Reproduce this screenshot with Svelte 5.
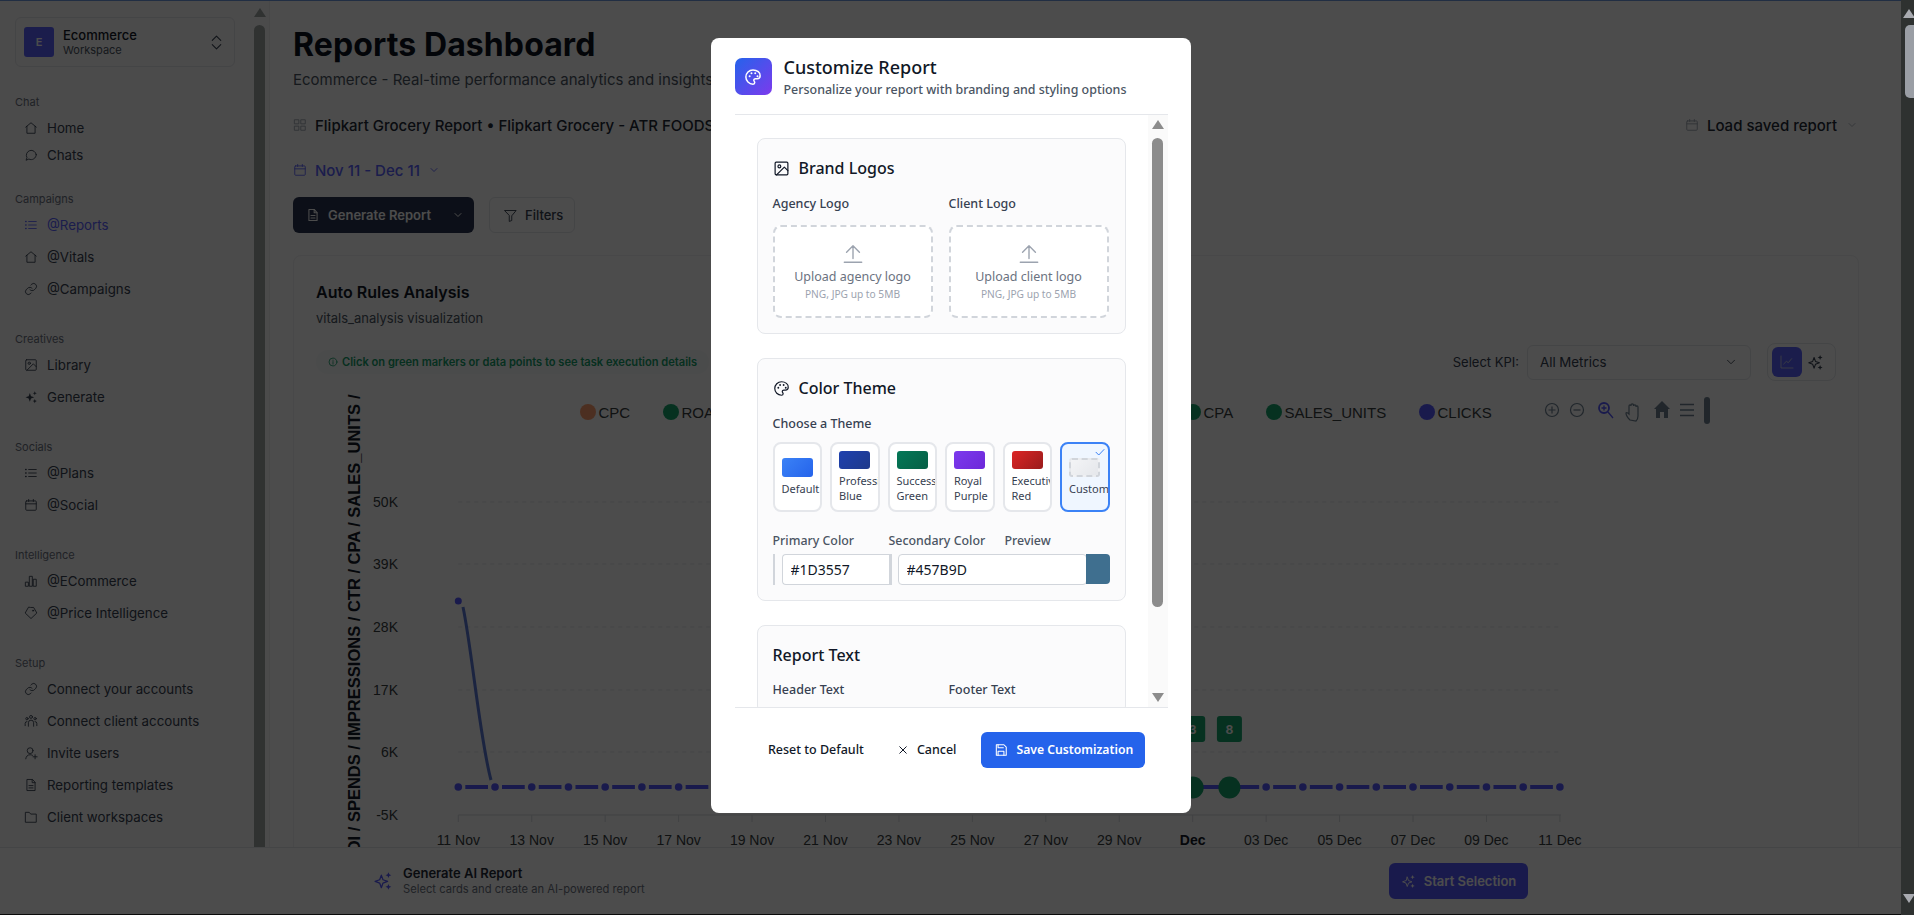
<script>
  const paths = {
    home: '<path d="M3 10.5 12 3l9 7.5"/><path d="M5 9v12h14V9"/>',
    chat: '<path d="M21 11.5a8.5 8.5 0 0 1-12.6 7.4L3.5 21l1.6-4.4A8.5 8.5 0 1 1 21 11.5z"/>',
    list: '<path d="M8 6h13M8 12h13M8 18h13"/><path d="M3 6h.5M3 12h.5M3 18h.5" stroke-width="2.6"/>',
    link: '<path d="M10 13a5 5 0 0 0 7.5.5l3-3a5 5 0 0 0-7-7l-1.7 1.7"/><path d="M14 11a5 5 0 0 0-7.5-.5l-3 3a5 5 0 0 0 7 7l1.7-1.7"/>',
    image: '<rect x="3" y="3" width="18" height="18" rx="1.5"/><circle cx="9" cy="9" r="2"/><path d="m21 15-5-5L5 21"/>',
    spark: '<path fill="currentColor" stroke="none" d="M10 5l2 5.5L17.5 12.5 12 14.5 10 20l-2-5.5L2.5 12.5 8 10.5zM18.5 2l1 2.5 2.5 1-2.5 1-1 2.500-1-2.500-2.500-1 2.500-1zM18.500 15.500l1 2.500 2.500 1-2.500 1-1 2.500-1-2.500-2.500-1 2.500-1z"/>',
    sparkline: '<path d="M10 5l2 5.500 5.500 2-5.500 2L10 20l-2-5.500-5.500-2 5.500-2z"/><path fill="currentColor" stroke="none" d="M18.500 1.500l1 2.500 2.500 1-2.500 1-1 2.500-1-2.500-2.500-1 2.500-1zM18.500 15.500l1 2.500 2.500 1-2.500 1-1 2.500-1-2.500-2.500-1 2.500-1z"/>',
    calendar: '<rect x="3" y="5" width="18" height="16" rx="1.500"/><path d="M3 10h18M8 2.500V6M16 2.500V6"/>',
    bars: '<rect x="3" y="14" width="4.500" height="7"/><rect x="9.800" y="4" width="4.500" height="17"/><rect x="16.500" y="9" width="4.500" height="12"/>',
    tag: '<path d="M12 2.500h4.500L22 12l-10 9.500L2 12l5.500-9.500z"/><circle cx="15.500" cy="8" r="1"/>',
    users: '<circle cx="12" cy="5" r="2.500"/><circle cx="5" cy="8" r="2"/><circle cx="19" cy="8" r="2"/><path d="M7.500 21v-6a4.500 4.500 0 0 1 9 0v6M2 20v-4a3 3 0 0 1 3-3M22 20v-4a3 3 0 0 0-3-3"/>',
    invite: '<circle cx="10.500" cy="8" r="5"/><path d="M3 22c.5-4.500 3.500-7 7.500-7 1.500 0 2.800.3 4 1M19 15v7M15.500 18.500h7"/>',
    file: '<path d="M14 2.500H5v19h14V8z"/><path d="M14 2.500V8h5M8.500 13h7M8.500 17h7"/>',
    folder: '<path d="M3 4h6l2.500 3H21v14H3z"/>',
    grid: '<rect x="3" y="3" width="7" height="7"/><rect x="14" y="3" width="7" height="7"/><rect x="3" y="14" width="7" height="7"/><rect x="14" y="14" width="7" height="7"/>',
    chev: '<path d="m6 9 6 6 6-6"/>',
    updown: '<path d="m6 9 6-6 6 6M6 15l6 6 6-6"/>',
    filter: '<path d="M3 4h18l-7 8.500V20l-4 1.500v-9z"/>',
    info: '<circle cx="12" cy="12" r="9.500"/><path d="M12 11v6M12 7.500v.5"/>',
    trend: '<path d="M3 3v18h18"/><path d="m7 15 4-4 3 2 5-6"/>',
    palette: '<path d="M12 2.500a9.500 9.500 0 0 0 0 19c1.500 0 2.300-1 2.300-2.200 0-.6-.3-1.100-.6-1.500-.4-.5-.6-.9-.6-1.500 0-1.200 1-2 2.200-2h2.200c2.500 0 4-1.700 4-4C22 6 17.500 2.500 12 2.500z"/><g fill="currentColor" stroke="none"><circle cx="7.500" cy="11" r="1.300"/><circle cx="10" cy="7" r="1.300"/><circle cx="15" cy="7" r="1.300"/><circle cx="18" cy="11" r="1.300"/></g>',
    upload: '<path d="M12 17V3M5 10l7-7 7 7M2.500 21h19"/>',
    close: '<path d="M5.500 5.500l13 13M18.500 5.500l-13 13"/>',
    save: '<path d="M4 3h13l4 4v14H4z"/><path d="M7 3v5h9M7 21v-7h10v7"/>',
    check: '<path d="m4 12.500 5.500 5.500L20 7"/>'
  };

  const sections = [
    { title: 'Chat', tight: true, items: [['home', 'Home'], ['chat', 'Chats']] },
    { title: 'Campaigns', items: [['list', '@Reports', true], ['home', '@Vitals'], ['link', '@Campaigns']] },
    { title: 'Creatives', items: [['image', 'Library'], ['spark', 'Generate']] },
    { title: 'Socials', items: [['list', '@Plans'], ['calendar', '@Social']] },
    { title: 'Intelligence', items: [['bars', '@ECommerce'], ['tag', '@Price Intelligence']] },
    { title: 'Setup', items: [['link', 'Connect your accounts'], ['users', 'Connect client accounts'], ['invite', 'Invite users'], ['file', 'Reporting templates'], ['folder', 'Client workspaces']] }
  ];

  const themes = [
    { key: 'default', name: 'Default' },
    { key: 'pro', name: 'Professional Blue' },
    { key: 'green', name: 'Success Green' },
    { key: 'purple', name: 'Royal Purple' },
    { key: 'red', name: 'Executive Red' },
    { key: 'custom', name: 'Custom' }
  ];

  const X0 = 458.3, STEP = 36.72;
  const xAt = (i) => X0 + i * STEP;
  const days = Array.from({ length: 31 }, (_, i) => i);
  const yLabels = [['50K', 502], ['39K', 564], ['28K', 627], ['17K', 690], ['6K', 752], ['-5K', 815]];
  const xLabels = ['11 Nov', '13 Nov', '15 Nov', '17 Nov', '19 Nov', '21 Nov', '23 Nov', '25 Nov', '27 Nov', '29 Nov', 'Dec', '03 Dec', '05 Dec', '07 Dec', '09 Dec', '11 Dec'];
  const legend = [
    { name: 'CPC', cx: 588, tone: 'brown' },
    { name: 'ROAS', cx: 671, tone: 'green' },
    { name: 'CPA', cx: 1193, tone: 'green' },
    { name: 'SALES_UNITS', cx: 1274, tone: 'green' },
    { name: 'CLICKS', cx: 1427, tone: 'navy' }
  ];
</script>

{#snippet icon(name, size = 14, sw = 1.5)}
  <svg class="ic" width={size} height={size} viewBox="0 0 24 24" fill="none" stroke="currentColor" stroke-width={sw} stroke-linecap="round" stroke-linejoin="round">{@html paths[name]}</svg>
{/snippet}

<div class="page">
  <aside class="sidebar">
    <div class="nav">
      <div class="workspace">
        <div class="avatar">E</div>
        <div class="ws-text">
          <div class="ws-name">Ecommerce</div>
          <div class="ws-sub">Workspace</div>
        </div>
        <span class="ws-chev">{@render icon('updown', 17, 1.5)}</span>
      </div>
      {#each sections as s}
        <section class="sec" class:tight={s.tight}>
          <div class="sec-title">{s.title}</div>
          {#each s.items as it}
            <div class="row" class:active={it[2]}>
              {@render icon(it[0], 14, 1.5)}
              <span>{it[1]}</span>
            </div>
          {/each}
        </section>
      {/each}
    </div>
    <div class="side-scroll">
      <div class="arr up"></div>
      <div class="side-thumb"></div>
    </div>
  </aside>

  <main class="main">
    <h1>Reports Dashboard</h1>
    <p class="subtitle">Ecommerce - Real-time performance analytics and insights</p>
    <div class="report-row">
      <div class="report-name">
        <span class="muted-ic">{@render icon('grid', 14, 1.5)}</span>
        <span>Flipkart Grocery Report • Flipkart Grocery - ATR FOODS</span>
      </div>
      <div class="load">
        <span class="muted-ic">{@render icon('calendar', 14, 1.5)}</span>
        <span>Load saved report</span>
        <span class="load-chev">{@render icon('chev', 12, 1.5)}</span>
      </div>
    </div>
    <div class="date-row">
      {@render icon('calendar', 14, 1.5)}
      <span>Nov 11 - Dec 11</span>
      {@render icon('chev', 12, 1.8)}
    </div>
    <div class="actions">
      <button class="gen">
        {@render icon('file', 14, 1.8)}
        <span>Generate Report</span>
        <span class="gen-chev">{@render icon('chev', 12, 2)}</span>
      </button>
      <button class="filters">
        {@render icon('filter', 15, 1.5)}
        <span>Filters</span>
      </button>
    </div>

    <div class="card">
      <div class="card-title">Auto Rules Analysis</div>
      <div class="card-sub">vitals_analysis visualization</div>
      <div class="controls">
        <div class="note">
          {@render icon('info', 10, 2)}
          <span>Click on green markers or data points to see task execution details</span>
        </div>
        <div class="kpi">
          <span class="kpi-label">Select KPI:</span>
          <div class="select"><span>All Metrics</span>{@render icon('chev', 14, 1.5)}</div>
          <div class="toggle">
            <span class="toggle-on">{@render icon('trend', 16, 1.4)}</span>
            <span class="toggle-off">{@render icon('sparkline', 17, 1.5)}</span>
          </div>
        </div>
      </div>
      <svg class="chart" width="1500" height="460" viewBox="300 393 1500 460">
        <text class="axis-title" transform="translate(360 404) rotate(-90)" text-anchor="end">CPC / ROAS / ROI / SPENDS / IMPRESSIONS / CTR / CPA / SALES_UNITS</text>
        <text class="axis-title" transform="translate(360 399) rotate(-90)">/ CLICKS</text>

        {#each legend as l}
          <circle class={'l-' + l.tone} cx={l.cx} cy="412" r="8" />
          <text class="legend" x={l.cx + 10.500} y="417.500">{l.name}</text>
        {/each}

        <g class="tools" fill="none" stroke-width="1.200">
          <circle cx="1552" cy="410" r="6.500" /><path d="M1548.500 410h7M1552 406.500v7" />
          <circle cx="1577" cy="410" r="6.500" /><path d="M1573.500 410h7" />
          <g class="t-zoom" stroke-width="1.800"><circle cx="1604" cy="408" r="5" /><path d="m1608 412 5 6M1601.500 408h5M1604 405.500v5" stroke-width="1.300" /></g>
          <path d="M1630 420c-2-2-4-5-4-7 1-1 2 0 3 1v-8c0-1.500 2-1.500 2 0v-1c0-1.500 2.500-1.500 2.500 0v1c0-1.500 2.500-1.500 2.500 0v1c0-1.500 2-1.500 2 0v9c0 2-1 4-2 5z" />
          <path class="t-fill" d="M1662 401l-8 8h2v9h4v-6h4v6h4v-9h2z" />
          <path d="M1680 404.500h14M1680 410h14M1680 415.500h14" stroke-width="1.600" />
        </g>
        <rect class="t-pill" x="1704" y="397" width="6" height="27" rx="3" />

        {#each yLabels.slice(0, 5) as y}
          <line class="grid" x1={X0} x2="1561" y1={y[1]} y2={y[1]} />
        {/each}
        {#each yLabels as y}
          <text class="tick" x="398" y={y[1] + 5} text-anchor="end">{y[0]}</text>
        {/each}

        <line class="axis" x1={X0} x2="1561" y1="815" y2="815" />
        {#each xLabels as lab, i}
          <line class="axis" x1={xAt(i * 2)} x2={xAt(i * 2)} y1="815" y2="822" />
          <text class="tick" class:bold={lab === 'Dec'} x={xAt(i * 2)} y="845" text-anchor="middle">{lab}</text>
        {/each}

        <path class="curve" d="M463 607C472 650 480 740 491 780" />
        {#each days.slice(0, 30) as d}
          <line class="seg" x1={xAt(d) + 7} x2={xAt(d + 1) - 7} y1="787" y2="787" />
        {/each}
        {#each days as d}
          <circle class="pt" cx={xAt(d)} cy="787" r="3.800" />
        {/each}
        <circle class="pt" cx={X0} cy="601" r="3.500" />
        <circle class="l-green" cx={xAt(20)} cy="787.500" r="11" />
        <circle class="l-green" cx={xAt(21)} cy="787.500" r="11" />
        <rect class="l-green" x={xAt(20) - 12.500} y="716" width="25" height="26" rx="3" />
        <rect class="l-green" x={xAt(21) - 12.500} y="716" width="25" height="26" rx="3" />
        <text class="badge" x={xAt(20)} y="734" text-anchor="middle">3</text>
        <text class="badge" x={xAt(21)} y="734" text-anchor="middle">8</text>
      </svg>
    </div>
  </main>

  <div class="bottom">
    <div class="bottom-left">
      <span class="bottom-ic">{@render icon('sparkline', 20, 1.5)}</span>
      <div>
        <div class="bottom-title">Generate AI Report</div>
        <div class="bottom-sub">Select cards and create an AI-powered report</div>
      </div>
    </div>
    <button class="start">{@render icon('sparkline', 15, 1.500)}<span>Start Selection</span></button>
  </div>
</div>

<div class="overlay">
  <div class="modal">
    <header class="m-head">
      <div class="m-logo">{@render icon('palette', 18, 2)}</div>
      <div>
        <div class="m-title">Customize Report</div>
        <div class="m-sub">Personalize your report with branding and styling options</div>
      </div>
    </header>

    <div class="m-body">
      <div class="m-scroll">
        <section class="panel">
          <h3>{@render icon('image', 17, 1.700)}<span>Brand Logos</span></h3>
          <div class="two">
            <div>
              <div class="lab">Agency Logo</div>
              <div class="drop">
                <span class="drop-ic">{@render icon('upload', 22, 1.500)}</span>
                <div class="drop-t">Upload agency logo</div>
                <div class="drop-s">PNG, JPG up to 5MB</div>
              </div>
            </div>
            <div>
              <div class="lab">Client Logo</div>
              <div class="drop">
                <span class="drop-ic">{@render icon('upload', 22, 1.500)}</span>
                <div class="drop-t">Upload client logo</div>
                <div class="drop-s">PNG, JPG up to 5MB</div>
              </div>
            </div>
          </div>
        </section>

        <section class="panel">
          <h3>{@render icon('palette', 17, 1.700)}<span>Color Theme</span></h3>
          <div class="lab">Choose a Theme</div>
          <div class="themes">
            {#each themes as t}
              <div class="theme" class:on={t.key === 'custom'}>
                {#if t.key === 'custom'}<span class="tick-on">{@render icon('check', 12, 2)}</span>{/if}
                <div class={'sw sw-' + t.key}></div>
                <div class="theme-name">{t.name}</div>
              </div>
            {/each}
          </div>
          <div class="color-labels">
            <span>Primary Color</span>
            <span>Secondary Color</span>
            <span>Preview</span>
          </div>
          <div class="color-row">
            <span class="sliver first"></span>
            <input class="hex hex-a" value="#1D3557" readonly />
            <span class="sliver"></span>
            <input class="hex hex-b" value="#457B9D" readonly />
            <span class="preview"></span>
          </div>
        </section>

        <section class="panel">
          <h3 class="plain"><span>Report Text</span></h3>
          <div class="two">
            <div class="lab">Header Text</div>
            <div class="lab">Footer Text</div>
          </div>
        </section>
      </div>
      <div class="m-bar">
        <div class="arr up grey"></div>
        <div class="m-thumb"></div>
        <div class="arr down grey"></div>
      </div>
    </div>

    <footer class="m-foot">
      <button class="ghost">Reset to Default</button>
      <button class="ghost cancel">{@render icon('close', 12, 2)}<span>Cancel</span></button>
      <button class="save">{@render icon('save', 14, 1.800)}<span>Save Customization</span></button>
    </footer>
  </div>
</div>

<div class="page-bar">
  <div class="arr up light"></div>
  <div class="page-thumb"></div>
  <div class="arr down light at-end"></div>
</div>

<style>
  :global(body) { margin: 0; background: #fff; overflow: hidden; }
  :global(*) { box-sizing: border-box; }
  .ic { flex: none; display: block; }

  .page { position: relative; display: flex; width: 1901px; height: 915px; overflow: hidden; border-top: 1px solid #6f9be0; font-family: Inter, "Liberation Sans", sans-serif; color: #111827; background: #fff; }

  .sidebar { flex: none; width: 270px; display: flex; border-right: 1px solid #f0f0f0; background: #fbfbfb; }
  .nav { width: 254px; padding: 16px 0 0 15px; flex: none; }
  .workspace { display: flex; align-items: center; width: 220px; height: 50px; padding: 0 9px 0 8px; border: 1px solid #e5e7eb; border-radius: 6px; }
  .avatar { width: 30px; height: 30px; flex: none; border-radius: 3px; background: #5b62ff; color: #fff; font-size: 11px; font-weight: 600; display: flex; align-items: center; justify-content: center; }
  .ws-text { margin-left: 9px; flex: 1; }
  .ws-name { font-size: 13px; font-weight: 500; line-height: 16px; }
  .ws-sub { font-size: 11px; line-height: 14px; color: #4b5563; }
  .ws-chev { color: #374151; }

  .sec { margin-top: 26px; }
  .sec.tight { margin-top: 27px; margin-bottom: -3px; }
  .sec-title { height: 16px; line-height: 16px; font-size: 11px; color: #6b7280; margin-bottom: 2px; }
  .sec.tight .sec-title { margin-bottom: 4px; }
  .row { display: flex; align-items: center; gap: 9px; height: 32px; padding-left: 9px; font-size: 13.3px; color: #374151; }
  .sec.tight .row { height: 27px; }
  .row.active { color: #5b62ff; }

  .side-scroll { flex: none; width: 11px; display: flex; flex-direction: column; align-items: center; padding-top: 7px; }
  .side-thumb { width: 11px; flex: 1; margin: 8px 0 0; border-radius: 6px 6px 0 0; background: #a0a8a5; }
  .arr { width: 0; height: 0; border-left: 6px solid transparent; border-right: 6px solid transparent; }
  .arr.up { border-bottom: 9px solid #a0a8a5; }
  .arr.down { border-top: 9px solid #a0a8a5; }
  .arr.up.grey { border-bottom-color: #8c8c8c; }
  .arr.down.grey { border-top-color: #8c8c8c; }
  .arr.up.light { border-bottom-color: #a8aab0; }
  .arr.down.light { border-top-color: #a8aab0; }

  .main { flex: 1; min-width: 0; padding: 26px 42px 0 23px; background: #fefefe; }
  h1 { margin: 0; font-size: 32px; line-height: 36px; font-weight: 700; letter-spacing: 0.1px; color: #0b1220; }
  .subtitle { margin: 7px 0 0; font-size: 15px; line-height: 20px; color: #4b5563; }
  .report-row { display: flex; justify-content: space-between; align-items: center; height: 24px; margin-top: 23px; font-size: 15px; font-weight: 500; }
  .report-name, .load { display: flex; align-items: center; gap: 8px; color: #1f2937; }
  .load { padding-right: 1px; }
  .muted-ic { color: #9ca3af; }
  .load-chev { color: #9ca3af; margin-left: 1px; }
  .date-row { display: flex; align-items: center; gap: 8px; height: 24px; margin-top: 21px; font-size: 15px; font-weight: 500; color: #5b62ff; }
  .actions { display: flex; gap: 15px; margin-top: 15px; }
  button { font-family: inherit; cursor: pointer; }
  .gen { display: flex; align-items: center; width: 181px; height: 36px; padding: 0 0 0 13px; gap: 8px; border: 0; border-radius: 6px; background: #2a3450; color: #fff; font-size: 13px; font-weight: 600; }
  .gen-chev { margin-left: auto; margin-right: 10px; }
  .filters { display: flex; align-items: center; gap: 7px; width: 86px; height: 36px; padding: 0 0 0 13px; border: 1px solid #e5e7eb; border-radius: 6px; background: #fff; color: #374151; font-size: 13px; font-weight: 500; }

  .card { margin-top: 22px; height: 700px; padding: 24px 22px 0; border: 1px solid #f0f1f3; border-radius: 8px; }
  .card-title { font-size: 16px; line-height: 24px; font-weight: 600; color: #111827; }
  .card-sub { margin-top: 6px; font-size: 13px; line-height: 16px; color: #4b5563; }
  .controls { display: flex; justify-content: space-between; align-items: center; height: 38px; margin-top: 17px; }
  .note { display: flex; align-items: center; gap: 4px; height: 24px; padding: 0 12px; border-radius: 12px; background: #f9fafb; color: #15a06a; font-size: 11.1px; font-weight: 600; }
  .kpi { display: flex; align-items: center; }
  .kpi-label { font-size: 13px; color: #374151; margin-right: 8px; }
  .select { display: flex; align-items: center; justify-content: space-between; width: 224px; height: 35px; padding: 0 12px; border: 1px solid #e5e7eb; border-radius: 6px; font-size: 13.3px; color: #374151; }
  .toggle { display: flex; align-items: center; width: 69px; height: 38px; margin-left: 16px; padding: 3px 4px; border: 1px solid #e5e7eb; border-radius: 8px; }
  .toggle-on { width: 30px; height: 30px; border-radius: 6px; background: #5b62ff; color: #c4c8e4; display: flex; align-items: center; justify-content: center; }
  .toggle-off { margin-left: 5px; color: #374151; }

  .chart { display: block; margin: 12px 0 0 -16px; overflow: hidden; }
  .axis-title { font: 700 16.5px "Liberation Sans", sans-serif; fill: #111827; }
  .legend { font: 15px "Liberation Sans", sans-serif; fill: #373d3f; }
  .tick { font: 14px "Liberation Sans", sans-serif; fill: #373d3f; }
  .tick.bold { font-weight: 700; fill: #111827; }
  .l-green { fill: #14a46c; }
  .l-brown { fill: #ff9f70; }
  .l-navy { fill: #5558ff; }
  .grid { stroke: #e5e7eb; stroke-dasharray: 4 4; }
  .axis { stroke: #d8dbe0; }
  .seg { stroke: #5558ff; stroke-width: 4; }
  .pt { fill: #5558ff; }
  .curve { fill: none; stroke: #5a78d8; stroke-width: 3; }
  .badge { font: 700 12px Inter, sans-serif; fill: #fff; }
  .tools { stroke: #6e8192; }
  .t-zoom { stroke: #5558ff; }
  .t-fill { fill: #6e8192; stroke: none; }
  .t-pill { fill: #6e8192; }

  .bottom { position: absolute; left: 0; right: 0; bottom: 0; height: 68px; display: flex; align-items: center; justify-content: space-between; padding: 0 373px; background: #fff; border-top: 1px solid #e5e7eb; border-bottom: 1px solid #222; }
  .bottom-left { display: flex; align-items: center; gap: 10px; }
  .bottom-ic { color: #5558ff; }
  .bottom-title { font-size: 13px; font-weight: 600; line-height: 16px; color: #1f2937; }
  .bottom-sub { font-size: 11.2px; line-height: 16px; color: #6b7280; }
  .start { display: flex; align-items: center; justify-content: center; gap: 8px; width: 139px; height: 36px; border: 0; border-radius: 6px; background: #5558ff; color: #fff; font-size: 13px; font-weight: 600; }

  .overlay { position: fixed; inset: 0; z-index: 10; display: flex; justify-content: center; align-items: flex-start; padding: 38px 13px 0 0; background: rgba(0, 0, 0, 0.7); font-family: "Noto Sans", "Liberation Sans", sans-serif; }
  .modal { display: flex; flex-direction: column; width: 480px; height: 775px; border-radius: 8px; background: #fff; color: #111827; }
  .m-head { display: flex; align-items: flex-start; gap: 12px; height: 77px; margin: 0 23px 0 24px; padding-top: 20px; border-bottom: 1px solid #e5e7eb; }
  .m-logo { display: flex; align-items: center; justify-content: center; width: 37px; height: 37px; border-radius: 7px; background: linear-gradient(135deg, #2563eb, #7c3aed); color: #fff; }
  .m-title { margin-top: -3px; font-size: 18px; line-height: 24px; font-weight: 500; color: #111827; }
  .m-sub { margin-top: 3px; font-size: 12.45px; line-height: 16px; font-weight: 500; color: #4b5563; }

  .m-body { position: relative; display: flex; height: 592px; margin: 0 23px 0 24px; overflow: hidden; }
  .m-scroll { flex: 1; min-width: 0; padding: 23px 22px 0 22px; }
  .panel { padding: 17px 15px 15px; border: 1px solid #e5e7eb; border-radius: 8px; background: #fbfbfc; margin-bottom: 24px; }
  h3 { display: flex; align-items: center; gap: 9px; margin: 0 0 16px; height: 24px; font-size: 16px; font-weight: 500; color: #111827; }
  h3.plain { margin-bottom: 15px; }
  .two { display: grid; grid-template-columns: 160px 160px; gap: 16px; }
  .lab { height: 16px; line-height: 16px; font-size: 12.5px; font-weight: 500; color: #374151; }
  .drop { display: flex; flex-direction: column; align-items: center; height: 93px; margin-top: 13px; padding-top: 16px; border: 2px dashed #d1d5db; border-radius: 8px; background: #fff; }
  .drop-ic { color: #9ca3af; }
  .drop-t { margin-top: 4px; font-size: 12.5px; line-height: 16px; color: #6b7280; }
  .drop-s { margin-top: 2px; font-size: 10.2px; line-height: 14px; color: #9ca3af; }

  .themes { display: grid; grid-template-columns: repeat(6, 1fr); gap: 8px; margin-top: 10px; }
  .theme { position: relative; min-width: 0; height: 70px; display: flex; flex-direction: column; justify-content: center; align-items: flex-start; padding: 0 7px; border: 2px solid #e5e7eb; border-radius: 8px; background: #fff; overflow: hidden; }
  .theme.on { border-color: #3b82f6; background: #eff6ff; }
  .tick-on { position: absolute; top: 2px; right: 2px; color: #3b82f6; }
  .sw { flex: none; width: 31px; height: 18px; border-radius: 3px; }
  .sw-default { background: linear-gradient(135deg, #3b82f6, #2563eb); height: 19px; }
  .sw-pro { background: linear-gradient(135deg, #1e40af, #1e3a8a); }
  .sw-green { background: linear-gradient(135deg, #047857, #065f46); }
  .sw-purple { background: linear-gradient(135deg, #7c3aed, #6d28d9); }
  .sw-red { background: linear-gradient(135deg, #dc2626, #991b1b); }
  .sw-custom { height: 19px; border: 2px dashed #d1d5db; background: linear-gradient(135deg, #f3f4f6, #e5e7eb); }
  .theme-name { margin-top: 4px; font-size: 11px; line-height: 15px; color: #374151; }

  .color-labels { display: grid; grid-template-columns: 116px 116px 1fr; margin-top: 21px; height: 16px; line-height: 16px; font-size: 12.4px; font-weight: 500; color: #4b5563; }
  .color-row { display: flex; align-items: stretch; height: 31px; margin-top: 5px; }
  .sliver { flex: none; width: 3px; background: #d1d5db; margin-right: 6px; }
  .sliver.first { width: 2px; margin-right: 7px; }
  .hex { min-width: 0; padding: 0 8px; border: 1px solid #d1d5db; background: #fff; color: #111827; font: 14px "Noto Sans", sans-serif; outline: none; }
  .hex-a { width: 107px; border-right: 0; border-radius: 4px 0 0 4px; }
  .hex-b { width: 189px; border-radius: 4px; }
  .preview { flex: 1; margin: 0 0 1px -1px; border-radius: 0 4px 4px 0; background: #3f6f8f; }

  .m-bar { flex: none; display: flex; flex-direction: column; align-items: center; width: 20px; padding-top: 5px; background: #fafafa; }
  .m-thumb { width: 11px; height: 469px; margin: 9px 0 86px; border-radius: 6px; background: #8c8c8c; }

  .m-foot { display: flex; justify-content: flex-end; align-items: flex-start; height: 67px; margin: 0 23px 0 24px; padding: 24px 23px 0 0; border-top: 1px solid #e5e7eb; }
  .ghost { display: flex; align-items: center; gap: 8px; height: 36px; padding: 0 12px 1px; border: 0; background: transparent; color: #111827; font-size: 12.5px; font-weight: 500; }
  .cancel { margin-left: 9px; }
  .save { display: flex; align-items: center; gap: 9px; width: 164px; height: 36px; margin-left: 12px; padding: 0 0 1px 13px; border: 0; border-radius: 6px; background: #2563eb; color: #fff; font-size: 12.2px; font-weight: 600; }

  .page-bar { position: fixed; top: 0; right: 0; bottom: 0; z-index: 20; width: 13px; display: flex; flex-direction: column; align-items: center; padding: 9px 0 12px 2px; background: #2e3130; }
  .page-thumb { width: 9px; height: 73px; margin: 7px 0 0 2px; border-radius: 5px 0 0 5px; background: #9a9ea5; }
  .at-end { margin-top: auto; }
</style>
